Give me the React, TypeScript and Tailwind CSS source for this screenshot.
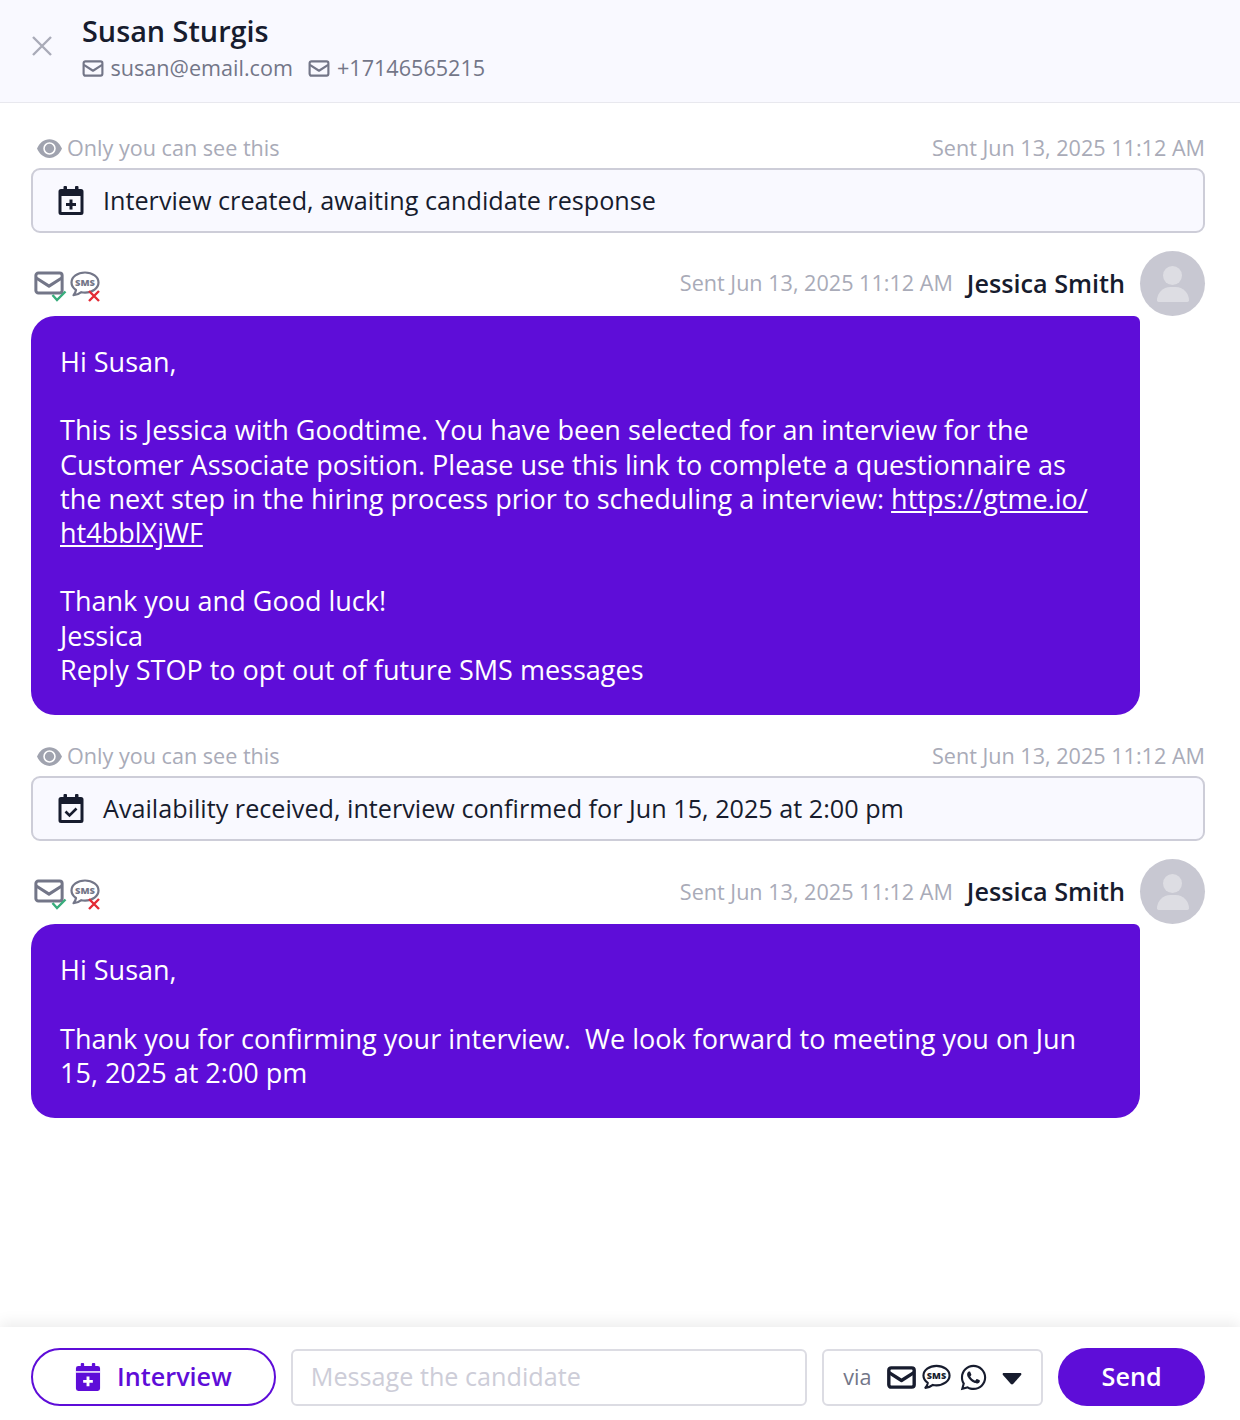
import { FaWhatsapp } from 'react-icons/fa';

const font = 'font-["Open_Sans",sans-serif]';

function Envelope({ className, weight = '2.400' }: { className?: string; weight?: string }) {
    return (
        <svg viewBox="0 0 24 19" fill="none" stroke="currentColor" strokeWidth={weight} strokeLinejoin="round" className={className}>
            <rect x="1.500" y="1.500" width="21" height="16" rx="2" />
            <path d="M1.800 5.500 12 12l10.200-6.500" />
        </svg>
    );
}

function SmsBubble({ className, color }: { className?: string; color: string }) {
    return (
        <svg viewBox="0 0 30 26" className={className}>
            <path d="M15 1.500C7.500 1.500 1.500 6 1.500 11.500c0 3 1.700 5.600 4.500 7.500-.3 2-1.200 3.800-2.500 5.200 3-.2 5.600-1.200 7.800-3 1.200.3 2.400.4 3.700.4 7.500 0 13.500-4.600 13.500-10.100S22.500 1.500 15 1.500Z" fill="none" stroke={color} strokeWidth="2.200" strokeLinejoin="round" />
            <text x="15" y="14.800" textAnchor="middle" fontSize="9.400" fontWeight="800" fill={color} fontFamily="Open Sans, sans-serif">SMS</text>
        </svg>
    );
}

function CalendarIcon({ kind, className }: { kind: 'plus' | 'check' | 'plus-solid'; className?: string }) {
    return (
        <svg viewBox="0 0 26 29" className={className} fill="currentColor">
            <rect x="5.500" y="0" width="3.500" height="6" rx="1" />
            <rect x="17" y="0" width="3.500" height="6" rx="1" />
            <path d="M3 3h20a2.500 2.500 0 0 1 2.500 2.500v21A2.500 2.500 0 0 1 23 29H3a2.500 2.500 0 0 1-2.500-2.500v-21A2.500 2.500 0 0 1 3 3Z" />
            {kind !== 'plus-solid' && <rect x="3.500" y="10" width="19" height="16" fill="#f9f9ff" />}
            {kind === 'plus-solid' && <rect x="0.500" y="8.500" width="25" height="1.500" fill="#fff" />}
            {kind === 'plus' && <path d="M11.500 13.500h3V17H18v3h-3.500v3.500h-3V20H8v-3h3.500Z" />}
            {kind === 'plus-solid' && <path d="M11.500 14h3v3.500H18v3h-3.500V24h-3v-3.500H8v-3h3.500Z" fill="#fff" />}
            {kind === 'check' && <path d="m7.500 17.500 4 4 7-7" fill="none" stroke="currentColor" strokeWidth="2.600" />}
        </svg>
    );
}

function Note({ icon, text }: { icon: 'plus' | 'check'; text: string }) {
    return (
        <div>
            <div className="flex h-[36px] items-center justify-between pb-[4px] text-[21.600px] text-[#a9abb8]">
                <div className="flex items-center gap-[5px] pl-[6px]">
                    <svg viewBox="0 0 24 18" className="h-[19px] w-[25px] text-[#a0a3af]" fill="currentColor">
                        <path fillRule="evenodd" d="M12 0C6.500 0 2.300 3.700 0 9c2.300 5.300 6.500 9 12 9s9.700-3.700 12-9c-2.300-5.300-6.500-9-12-9Zm0 15a6 6 0 1 1 0-12 6 6 0 0 1 0 12Zm0-1.500a4.500 4.500 0 1 0 0-9 4.500 4.500 0 0 0 0 9Z" />
                    </svg>
                    <span>Only you can see this</span>
                </div>
                <span>Sent Jun 13, 2025 11:12 AM</span>
            </div>
            <div className="flex h-[65px] items-center gap-[19px] rounded-[9px] border-2 border-[#cdcdd8] bg-[#f9f9ff] pl-[25px] text-[25.200px] text-[#171c2e]">
                <CalendarIcon kind={icon} className="h-[29px] w-[26px] text-[#171c2e]" />
                <span>{text}</span>
            </div>
        </div>
    );
}

function SenderRow() {
    return (
        <div className="flex h-[65px] items-center justify-between">
            <div className="flex items-center gap-[6px] pt-[4px] pl-[3px]">
                <div className="relative h-[30px] w-[30px]">
                    <Envelope className="h-[24px] w-[30px] text-[#737688]" />
                    <svg viewBox="0 0 16 12" className="absolute -right-[3px] bottom-[-1px] h-[12px] w-[16px]" fill="none" stroke="#37ac7b" strokeWidth="2.400">
                        <path d="m1.500 5 4.500 5 8.500-8.500" />
                    </svg>
                </div>
                <div className="relative h-[30px] w-[30px]">
                    <SmsBubble className="h-[26px] w-[30px]" color="#737688" />
                    <svg viewBox="0 0 12 12" className="absolute right-0 -bottom-[1px] h-[12px] w-[12px]" fill="none" stroke="#e32b35" strokeWidth="2.400">
                        <path d="m1 1 10 10M11 1 1 11" />
                    </svg>
                </div>
            </div>
            <div className="flex items-center">
                <span className="text-[21.600px] text-[#a9abb8]">Sent Jun 13, 2025 11:12 AM</span>
                <span className="ml-[14px] text-[25.200px] font-[550] text-[#171c2e]">Jessica Smith</span>
                <div className="ml-[15px] flex h-[65px] w-[65px] flex-col items-center justify-center rounded-full bg-[#c8c8d2] pt-[1px]">
                    <div className="h-[19px] w-[19px] rounded-full bg-[#dddde3]" />
                    <div className="mt-[2px] h-[15px] w-[32px] rounded-t-[16px] rounded-b-[2px] bg-[#dddde3]" />
                </div>
            </div>
        </div>
    );
}

function Bubble({ children }: { children: React.ReactNode }) {
    return (
        <div className="w-[1109px] rounded-[24px] rounded-tr-[6px] bg-[#5e0dd8] px-[29px] pt-[29px] pb-[28px] text-[27.030px] leading-[34.300px] text-white">
            {children}
        </div>
    );
}

export default function App() {
    return (
        <div className={`${font} flex h-[1420px] w-[1240px] flex-col bg-white`}>
            <div className="flex h-[103px] shrink-0 items-start border-b border-[#e8e8ee] bg-[#f9f9ff] pt-[12px]">
                <svg viewBox="0 0 20 20" className="mt-[24px] ml-[32px] h-[20px] w-[20px]" stroke="#a9abb8" strokeWidth="2.400">
                    <path d="m1 1 18 18M19 1 1 19" />
                </svg>
                <div className="ml-[30px]">
                    <div className="text-[28.800px] leading-[38px] font-[550] text-[#171c2e]">Susan Sturgis</div>
                    <div className="mt-[3px] flex items-center text-[21.600px] leading-[30px] text-[#737688]">
                        <Envelope className="h-[17px] w-[22px]" />
                        <span className="ml-[6.500px]">susan@email.com</span>
                        <Envelope className="ml-[15px] h-[17px] w-[22px]" />
                        <span className="ml-[7px]">+17146565215</span>
                    </div>
                </div>
            </div>

            <div className="flex-1 px-[31px] pt-[29px] pr-[35px]">
                <Note icon="plus" text="Interview created, awaiting candidate response" />
                <div className="mt-[18px]"><SenderRow /></div>
                <Bubble>
                    <p>Hi Susan,</p>
                    <p className="mt-[34px]">This is Jessica with Goodtime. You have been selected for an interview for the Customer Associate position. Please use this link to complete a questionnaire as the next step in the hiring process prior to scheduling a interview: <span className="underline">https://gtme.io/</span> <span className="underline">ht4bblXjWF</span></p>
                    <p className="mt-[34px]">Thank you and Good luck!</p>
                    <p>Jessica</p>
                    <p>Reply STOP to opt out of future SMS messages</p>
                </Bubble>
                <div className="mt-[25px]">
                    <Note icon="check" text="Availability received, interview confirmed for Jun 15, 2025 at 2:00 pm" />
                </div>
                <div className="mt-[18px]"><SenderRow /></div>
                <Bubble>
                    <p>Hi Susan,</p>
                    <p className="mt-[34px]">Thank you for confirming your interview.&nbsp; We look forward to meeting you on Jun 15, 2025 at 2:00 pm</p>
                </Bubble>
            </div>

            <div className="flex h-[93px] shrink-0 items-center gap-[15px] bg-white pt-[7px] pr-[35px] pl-[31px] shadow-[0_-4px_14px_rgba(0,0,0,0.08)]">
                <button className="flex h-[58px] w-[245px] items-center justify-center gap-[16px] rounded-full border-2 border-[#5e0dd8] text-[25.200px] font-[550] text-[#5e0dd8]">
                    <CalendarIcon kind="plus-solid" className="h-[28px] w-[26px]" />
                    Interview
                </button>
                <div className="flex h-[57px] w-[517px] items-center rounded-[6px] border-2 border-[#dcdce3] pl-[18px] text-[25.200px] text-[#cdcdd8]">
                    Message the candidate
                </div>
                <div className="flex h-[57px] w-[221px] items-center rounded-[6px] border-2 border-[#dcdce3] pl-[19px] text-[#171c2e]">
                    <span className="text-[21.600px] text-[#737688]">via</span>
                    <Envelope className="ml-[15px] h-[23px] w-[29px]" weight="2.800" />
                    <SmsBubble className="ml-[6px] h-[26px] w-[29px]" color="#171c2e" />
                    <FaWhatsapp className="ml-[8px] h-[29px] w-[29px]" />
                    <svg viewBox="0 0 18 11" className="mt-[3px] ml-[14px] h-[12px] w-[20px]" fill="currentColor">
                        <path d="M1.500 0h15c1 0 1.500 1 .8 1.800L10 10c-.6.600-1.400.600-2 0L.7 1.800C0 1 .5 0 1.500 0Z" />
                    </svg>
                </div>
                <button className="h-[58px] w-[147px] rounded-full bg-[#5e0dd8] text-[25.200px] font-[550] text-white">Send</button>
            </div>
        </div>
    );
}
